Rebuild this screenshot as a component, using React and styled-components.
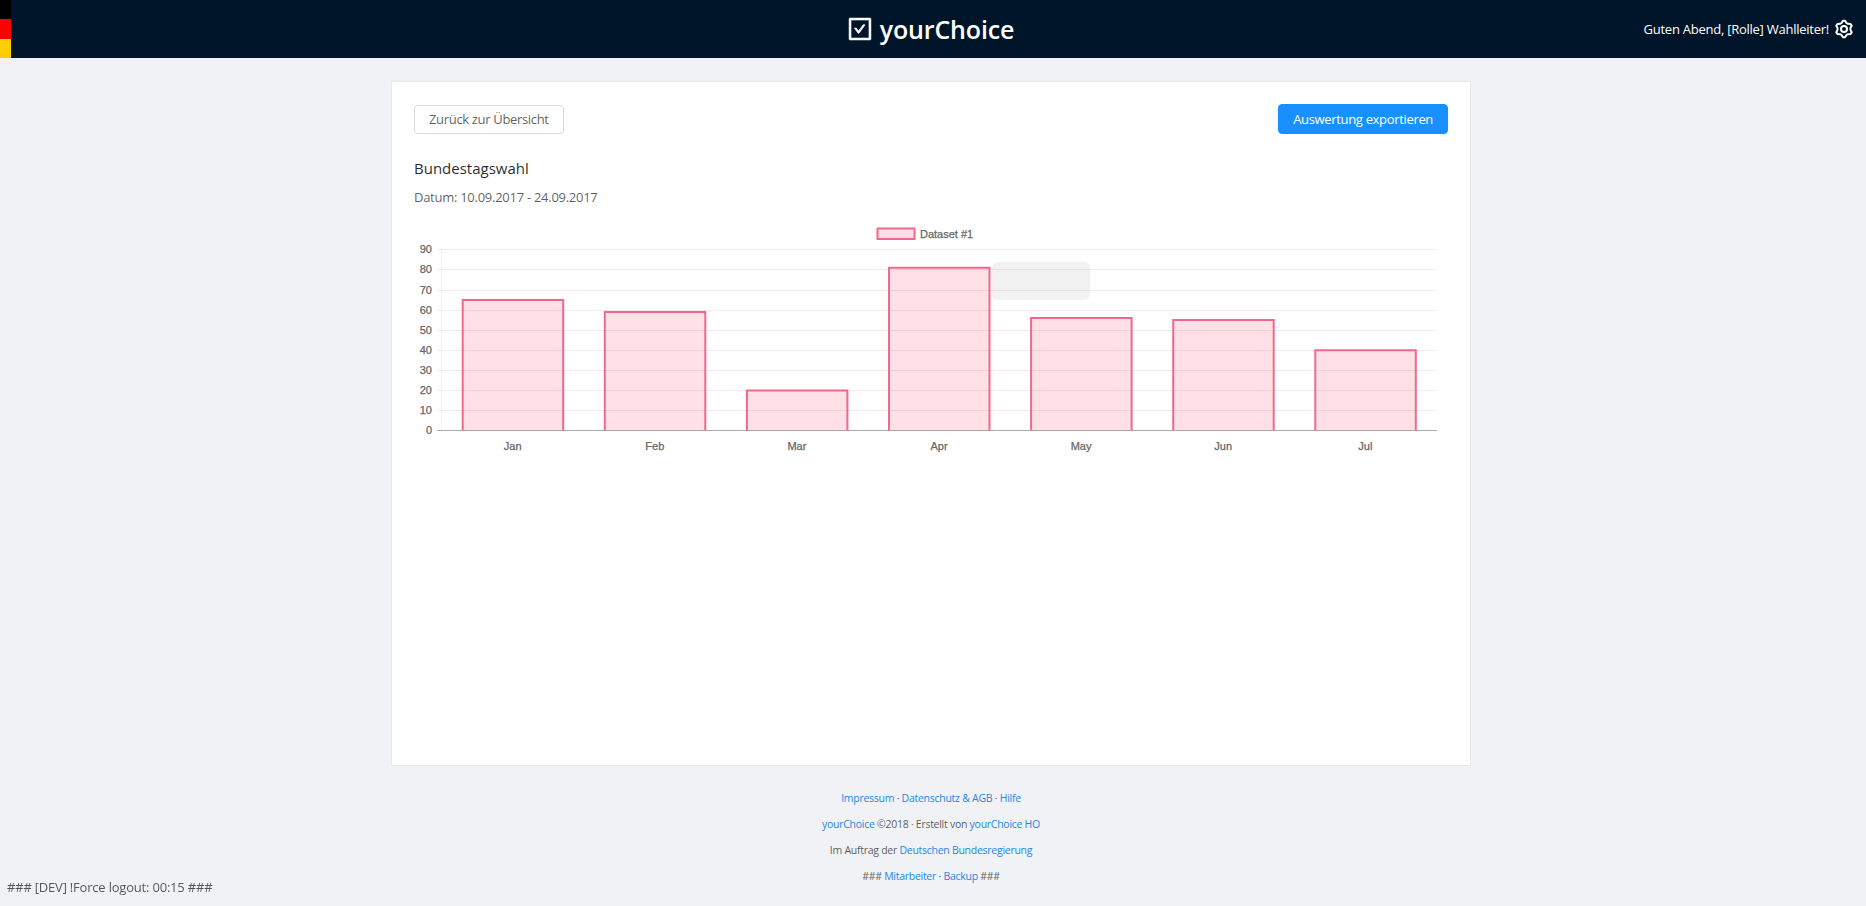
import React from 'react';
import styled, { createGlobalStyle } from 'styled-components';
import { AiOutlineCheckSquare } from 'react-icons/ai';

const GlobalStyle = createGlobalStyle`
  html, body { margin: 0; padding: 0; background: #f0f2f5; }
  body {
    font-family: "Open Sans", "Noto Sans", "Liberation Sans", sans-serif;
    font-size: 14px;
    color: rgba(0, 0, 0, .65);
  }
`;

const Header = styled.header`
  height: 58px;
  background: #001529;
  display: grid;
  grid-template-columns: 1fr auto 1fr;
  align-items: center;
  padding-right: 12px;
`;

const Flag = styled.div`
  width: 11px;
  height: 58px;
  display: flex;
  flex-direction: column;
`;

const Stripe = styled.span`
  flex: 1;
  background: ${({ $color }) => $color};
`;

const Logo = styled.div`
  display: flex;
  align-items: center;
  gap: 6px;
  color: #fff;
  font-size: 25px;
  font-weight: 600;
  letter-spacing: -.15px;
  margin-left: 6px;
`;

const UserBox = styled.div`
  justify-self: end;
  display: flex;
  align-items: center;
  gap: 5px;
  color: #fff;
  font-size: 13px;
  letter-spacing: -.25px;
`;

const Main = styled.main`
  width: 1080px;
  margin: 23px 0 0 391px;
`;

const Card = styled.section`
  height: 685px;
  box-sizing: border-box;
  background: #fff;
  border: 1px solid #e8e8e8;
  padding: 22px 22px 0 22px;
`;

const Actions = styled.div`
  display: flex;
  justify-content: space-between;
  align-items: center;
`;

const Button = styled.button`
  height: ${({ $primary }) => ($primary ? '30px' : '29px')};
  padding: 0 14px;
  font: inherit;
  font-size: 13px;
  letter-spacing: -.33px;
  border-radius: 4px;
  border: 1px solid ${({ $primary }) => ($primary ? '#1890ff' : '#d9d9d9')};
  background: ${({ $primary }) => ($primary ? '#1890ff' : '#fff')};
  color: ${({ $primary }) => ($primary ? '#fff' : 'rgba(0, 0, 0, .65)')};
`;

const Title = styled.h2`
  margin: 23px 0 0;
  font-size: 15px;
  line-height: 22px;
  font-weight: 500;
  color: rgba(0, 0, 0, .85);
`;

const DateLine = styled.p`
  margin: 8px 0 0;
  font-size: 13px;
  line-height: 20px;
  letter-spacing: -.27px;
`;

const Chart = styled.svg`
  display: block;
  margin: 13px 0 0 1px;
  text {
    font-family: "Liberation Sans", Arial, sans-serif;
    font-size: 11px;
    fill: #666;
    stroke: #666;
    stroke-width: .25px;
  }
`;

const Footer = styled.footer`
  width: 1080px;
  margin: 19px 0 0 391px;
  text-align: center;
  font-size: 10.5px;
  letter-spacing: -.27px;
  line-height: 26px;
  a { color: #2a86e8; text-decoration: none; }
`;

const DevNote = styled.div`
  position: fixed;
  left: 7px;
  bottom: 9px;
  font-size: 13px;
  line-height: 20px;
  letter-spacing: -.2px;
`;

// six lobed outline for the settings icon
const gearPoints = Array.from({ length: 24 }, (_, i) => {
  const angle = ((i * 15 - 90 - 7.5) * Math.PI) / 180;
  const r = i % 4 < 2 ? 10 : 7.8;
  return `${(r * Math.cos(angle)).toFixed(2)},${(r * Math.sin(angle)).toFixed(2)}`;
}).join(' ');

const GearIcon = () => (
  <svg width="20" height="20" viewBox="-12 -12 24 24" fill="none" stroke="currentColor" strokeWidth="2.4" strokeLinejoin="round">
    <polygon points={gearPoints} />
    <circle r="3.6" />
  </svg>
);

// chart coordinates are relative to the svg, which starts at x=415 y=220
const values = [65, 59, 20, 81, 56, 55, 40];
const months = ['Jan', 'Feb', 'Mar', 'Apr', 'May', 'Jun', 'Jul'];
const ticks = [90, 80, 70, 60, 50, 40, 30, 20, 10, 0];
const bottom = 210.3;
const unit = 2.011;

const BarChart = () => (
  <Chart width="1033" height="240">
    <rect x="462.5" y="8.5" width="37" height="10.5" fill="#fddfe5" stroke="#f0688c" strokeWidth="2" />
    <text x="505" y="18">Dataset #1</text>

    <line x1="26.5" y1="29" x2="26.5" y2={bottom} stroke="rgba(255,99,132,.12)" />
    {ticks.map(t => {
      const y = Math.round(bottom - t * unit) + 0.5;
      return (
        <g key={t}>
          <line x1="22" y1={y} x2="1022" y2={y} stroke={t === 0 ? '#aaa' : 'rgba(210,130,150,.18)'} />
          <text x="17" y={y + 3.5} textAnchor="end">{t}</text>
        </g>
      );
    })}

    {values.map((v, i) => {
      const left = 47.7 + i * 142.1;
      const top = bottom - v * unit + 0.3;
      return (
        <g key={months[i]}>
          <rect x={left} y={top} width="100.5" height={bottom - top} fill="rgba(255,99,132,.2)" />
          <path d={`M${left} ${bottom}V${top}H${left + 100.5}V${bottom}`} fill="none" stroke="#f0688c" strokeWidth="2" />
          <text x={left + 50} y="230" textAnchor="middle">{months[i]}</text>
        </g>
      );
    })}

    <rect x="577" y="42" width="98" height="38" rx="6" fill="rgba(0,0,0,.05)" />
  </Chart>
);

const App = () => (
  <>
    <GlobalStyle />
    <Header>
      <Flag>
        <Stripe $color="#000" />
        <Stripe $color="#f00" />
        <Stripe $color="#ffce00" />
      </Flag>
      <Logo>
        <AiOutlineCheckSquare size={28} stroke="currentColor" strokeWidth={20} />
        yourChoice
      </Logo>
      <UserBox>
        Guten Abend, [Rolle] Wahlleiter!
        <GearIcon />
      </UserBox>
    </Header>
    <Main>
      <Card>
        <Actions>
          <Button>Zurück zur Übersicht</Button>
          <Button $primary>Auswertung exportieren</Button>
        </Actions>
        <Title>Bundestagswahl</Title>
        <DateLine>Datum: 10.09.2017 - 24.09.2017</DateLine>
        <BarChart />
      </Card>
    </Main>
    <Footer>
      <div><a href="#">Impressum</a> · <a href="#">Datenschutz &amp; AGB</a> · <a href="#">Hilfe</a></div>
      <div><a href="#">yourChoice</a> ©2018 · Erstellt von <a href="#">yourChoice HO</a></div>
      <div>Im Auftrag der <a href="#">Deutschen Bundesregierung</a></div>
      <div>### <a href="#">Mitarbeiter</a> · <a href="#">Backup</a> ###</div>
    </Footer>
    <DevNote>### [DEV] !Force logout: 00:15 ###</DevNote>
  </>
);

export default App;
